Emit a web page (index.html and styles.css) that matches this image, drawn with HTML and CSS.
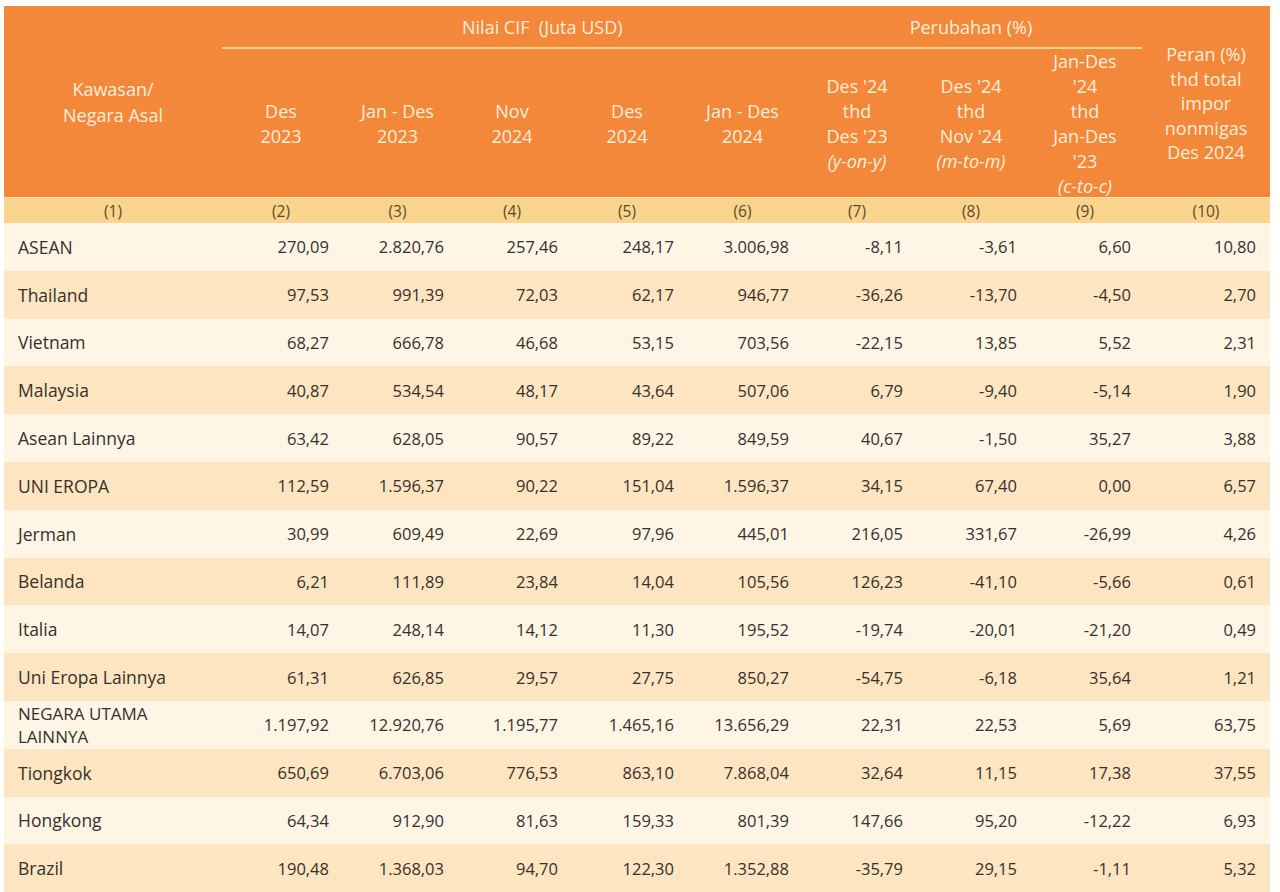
FILE: index.html
```html
<!DOCTYPE html>
<html lang="id">
<head>
<meta charset="utf-8">
<title>Nilai CIF Impor Nonmigas</title>
<link rel="stylesheet" href="styles.css">
</head>
<body>
<div class="table">
  <div class="head grid">
    <div class="hcell span2 c1"><span>Kawasan/<br>Negara Asal</span></div>
    <div class="group nilai"><span>Nilai CIF&nbsp; (Juta USD)</span></div>
    <div class="group perub"><span>Perubahan (%)</span></div>
    <div class="hcell span2 c10"><span>Peran (%)<br>thd total<br>impor<br>nonmigas<br>Des 2024</span></div>
    <div class="hcell sub"><span>Des<br>2023</span></div>
    <div class="hcell sub"><span>Jan - Des<br>2023</span></div>
    <div class="hcell sub"><span>Nov<br>2024</span></div>
    <div class="hcell sub"><span>Des<br>2024</span></div>
    <div class="hcell sub"><span>Jan - Des<br>2024</span></div>
    <div class="hcell sub"><span>Des '24<br>thd<br>Des '23<br><i>(y-on-y)</i></span></div>
    <div class="hcell sub"><span>Des '24<br>thd<br>Nov '24<br><i>(m-to-m)</i></span></div>
    <div class="hcell sub"><span>Jan-Des<br>'24<br>thd<br>Jan-Des<br>'23<br><i>(c-to-c)</i></span></div>
  </div>
  <div class="nums grid">
    <div>(1)</div><div>(2)</div><div>(3)</div><div>(4)</div><div>(5)</div><div>(6)</div><div>(7)</div><div>(8)</div><div>(9)</div><div>(10)</div>
  </div>
  <div class="row grid odd"><div class="name">ASEAN</div><div>270,09</div><div>2.820,76</div><div>257,46</div><div>248,17</div><div>3.006,98</div><div>-8,11</div><div>-3,61</div><div>6,60</div><div>10,80</div></div>
  <div class="row grid even"><div class="name">Thailand</div><div>97,53</div><div>991,39</div><div>72,03</div><div>62,17</div><div>946,77</div><div>-36,26</div><div>-13,70</div><div>-4,50</div><div>2,70</div></div>
  <div class="row grid odd"><div class="name">Vietnam</div><div>68,27</div><div>666,78</div><div>46,68</div><div>53,15</div><div>703,56</div><div>-22,15</div><div>13,85</div><div>5,52</div><div>2,31</div></div>
  <div class="row grid even"><div class="name">Malaysia</div><div>40,87</div><div>534,54</div><div>48,17</div><div>43,64</div><div>507,06</div><div>6,79</div><div>-9,40</div><div>-5,14</div><div>1,90</div></div>
  <div class="row grid odd"><div class="name">Asean Lainnya</div><div>63,42</div><div>628,05</div><div>90,57</div><div>89,22</div><div>849,59</div><div>40,67</div><div>-1,50</div><div>35,27</div><div>3,88</div></div>
  <div class="row grid even"><div class="name">UNI EROPA</div><div>112,59</div><div>1.596,37</div><div>90,22</div><div>151,04</div><div>1.596,37</div><div>34,15</div><div>67,40</div><div>0,00</div><div>6,57</div></div>
  <div class="row grid odd"><div class="name">Jerman</div><div>30,99</div><div>609,49</div><div>22,69</div><div>97,96</div><div>445,01</div><div>216,05</div><div>331,67</div><div>-26,99</div><div>4,26</div></div>
  <div class="row grid even"><div class="name">Belanda</div><div>6,21</div><div>111,89</div><div>23,84</div><div>14,04</div><div>105,56</div><div>126,23</div><div>-41,10</div><div>-5,66</div><div>0,61</div></div>
  <div class="row grid odd"><div class="name">Italia</div><div>14,07</div><div>248,14</div><div>14,12</div><div>11,30</div><div>195,52</div><div>-19,74</div><div>-20,01</div><div>-21,20</div><div>0,49</div></div>
  <div class="row grid even"><div class="name">Uni Eropa Lainnya</div><div>61,31</div><div>626,85</div><div>29,57</div><div>27,75</div><div>850,27</div><div>-54,75</div><div>-6,18</div><div>35,64</div><div>1,21</div></div>
  <div class="row grid odd"><div class="name two">NEGARA UTAMA<br>LAINNYA</div><div>1.197,92</div><div>12.920,76</div><div>1.195,77</div><div>1.465,16</div><div>13.656,29</div><div>22,31</div><div>22,53</div><div>5,69</div><div>63,75</div></div>
  <div class="row grid even"><div class="name">Tiongkok</div><div>650,69</div><div>6.703,06</div><div>776,53</div><div>863,10</div><div>7.868,04</div><div>32,64</div><div>11,15</div><div>17,38</div><div>37,55</div></div>
  <div class="row grid odd"><div class="name">Hongkong</div><div>64,34</div><div>912,90</div><div>81,63</div><div>159,33</div><div>801,39</div><div>147,66</div><div>95,20</div><div>-12,22</div><div>6,93</div></div>
  <div class="row grid even"><div class="name">Brazil</div><div>190,48</div><div>1.368,03</div><div>94,70</div><div>122,30</div><div>1.352,88</div><div>-35,79</div><div>29,15</div><div>-1,11</div><div>5,32</div></div>
</div>
</body>
</html>
```
FILE: styles.css
```css
html, body {
  margin: 0;
  padding: 0;
  background: #ffffff;
}
body {
  padding: 6px 10px 0 4px;
  font-family: "Open Sans", "Noto Sans", sans-serif;
  font-size: 16.5px;
  color: #34312e;
}
.table {
  width: 1266px;
}
.grid {
  display: grid;
  grid-template-columns: 218px 118px 115px 114px 116px 115px 114px 114px 114px 128px;
}
.head {
  background: #f3883a;
  color: #fdeedb;
  grid-template-rows: 43px 148px;
  line-height: 24.5px;
  font-size: 18px;
  text-align: center;
  overflow: hidden;
}
.hcell {
  display: flex;
  flex-direction: column;
  align-items: center;
  justify-content: center;
}
.hcell > span {
  display: block;
}
.span2 {
  grid-row: 1 / span 2;
}
.c1 { grid-column: 1; }
.c10 { grid-column: 10; padding-top: 4px; }
.c1 > span {
  line-height: 26px;
}
.group {
  grid-row: 1;
  border-bottom: 2px solid #f8d68e;
  display: flex;
  align-items: center;
  padding-top: 1px;
}
.nilai {
  grid-column: 2 / span 5;
  justify-content: flex-start;
  padding-left: 240px;
}
.perub {
  grid-column: 7 / span 3;
  justify-content: center;
}
.sub {
  grid-row: 2;
  padding-top: 2px;
  line-height: 25px;
}
.head i {
  font-style: italic;
}
.nums {
  background: #f9d48c;
  border-top: 1px solid #fbe3b6;
  height: 25px;
  color: #5d4a2c;
  text-align: center;
  align-items: center;
  font-size: 15.5px;
}
.row {
  height: 47.8px;
  align-items: center;
}
.row > div {
  text-align: right;
  padding-right: 11px;
}
.row > div:last-child {
  padding-right: 14px;
}
.row > .name {
  text-align: left;
  padding-left: 14px;
  padding-right: 0;
  font-size: 17.5px;
}
.row > .two {
  font-size: 17px;
  line-height: 23px;
}
.odd {
  background: #fef5e5;
}
.even {
  background: #fce5c0;
}
```
